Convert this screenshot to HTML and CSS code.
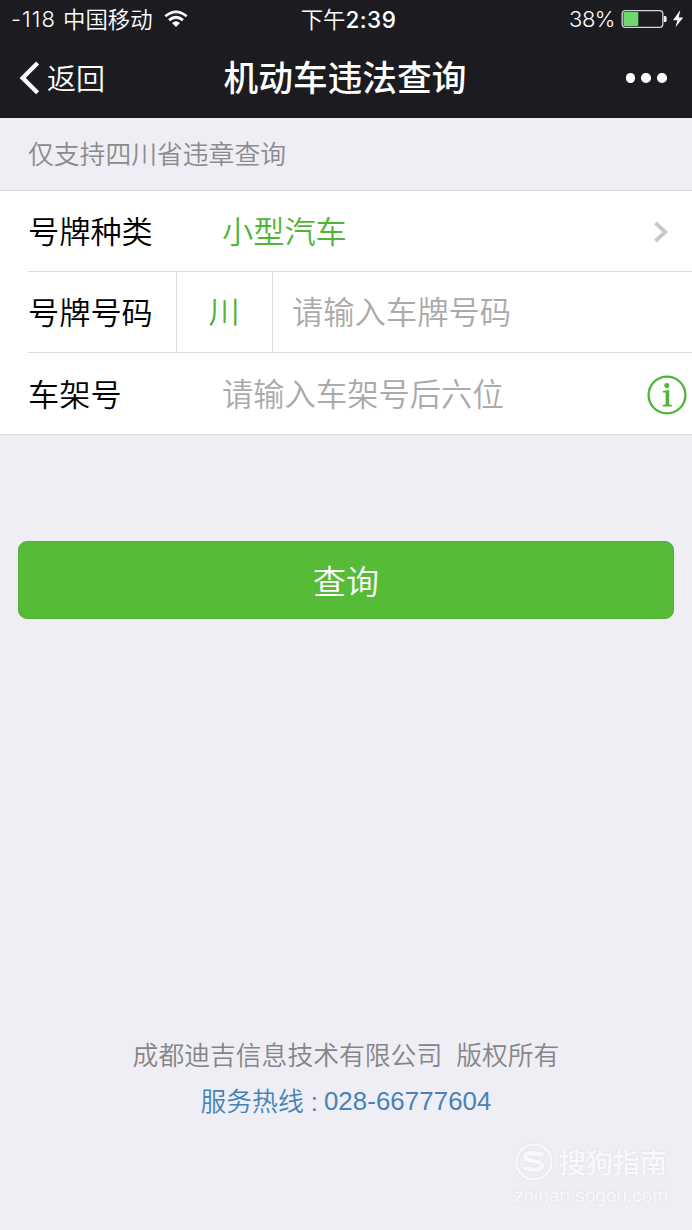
FILE: index.html
```html
<!DOCTYPE html>
<html lang="zh-CN">
<head>
<meta charset="utf-8">
<title>机动车违法查询</title>
<link rel="stylesheet" href="styles.css">
</head>
<body>
<div class="screen">
  <header class="top">
    <div class="status">
      <div class="status-left">
        <span class="signal">-118</span><span class="carrier">中国移动</span>
        <svg class="wifi" width="24" height="18" viewBox="0 0 24 18" fill="none" stroke="#fff" stroke-width="2.7">
          <path d="M1.3 6.2Q12 -2.6 22.7 6.2"/>
          <path d="M5 10.1Q12 4.4 19 10.1"/>
          <path d="M12 17L8 12.9Q12 9.8 16 12.9Z" fill="#fff" stroke="none"/>
        </svg>
      </div>
      <div class="status-time">下午<b>2:39</b></div>
      <div class="status-right">
        <span class="percent">38%</span>
        <svg class="battery" width="64" height="20" viewBox="0 0 64 20">
          <rect x="1.2" y="1.7" width="40.6" height="16.6" rx="3" fill="none" stroke="#d6d6d8" stroke-width="1.3"/>
          <rect x="2.5" y="3" width="14.8" height="14" rx="1" fill="#70d76d"/>
          <path d="M42.8 7h1.2q1.6 0 1.6 1.6v2.8q0 1.6-1.6 1.6h-1.2z" fill="#fff"/>
          <path d="M59.3 1L52 11.2h4.4L54.5 18.3 62.2 8.4h-4.5z" fill="#fff"/>
        </svg>
      </div>
    </div>
    <nav class="nav">
      <div class="back">
        <svg width="22" height="36" viewBox="0 0 22 36" fill="none" stroke="#fff" stroke-width="4.3"><path d="M19.6 3L4.6 17.9 19.6 32.8"/></svg>
        <span>返回</span>
      </div>
      <h1 class="title">机动车违法查询</h1>
      <div class="more"><i></i><i></i><i></i></div>
    </nav>
  </header>

  <p class="tip">仅支持四川省违章查询</p>

  <section class="form">
    <div class="row">
      <span class="label">号牌种类</span>
      <span class="value green">小型汽车</span>
      <svg class="chevron" width="16" height="22" viewBox="0 0 16 22" fill="none" stroke="#c7c7cc" stroke-width="3.8"><path d="M2.5 2L12.2 11 2.5 20"/></svg>
    </div>
    <div class="row">
      <span class="label narrow">号牌号码</span>
      <span class="province green">川</span>
      <span class="value plate hint">请输入车牌号码</span>
    </div>
    <div class="row last">
      <span class="label">车架号</span>
      <span class="value hint">请输入车架号后六位</span>
      <svg class="info" width="40" height="40" viewBox="0 0 40 40">
        <circle cx="20" cy="20" r="18.4" fill="none" stroke="#50b435" stroke-width="2.3"/>
        <circle cx="19.8" cy="10.6" r="2.5" fill="#50b435"/>
        <path d="M15.8 16L22.2 15v14.5l2.7.4v1.6h-9.2v-1.6l2.9-.4V17.6l-2.8-.2z" fill="#50b435"/>
      </svg>
    </div>
  </section>

  <button class="submit">查询</button>

  <footer class="footer">
    <p class="owner"><span>成都迪吉信息技术有限公司</span><span>版权所有</span></p>
    <p class="hotline"><span>服务热线</span><span class="colon">:</span><span class="number">028-66777604</span></p>
  </footer>

  <div class="mark">
    <div class="mark-top">
      <svg width="40" height="40" viewBox="0 0 40 40" fill="none" stroke="#f9f9fb">
        <circle cx="20" cy="20" r="17.5" stroke-width="2.2"/>
        <path d="M29.5 12.7Q10 8.5 11.5 15.5C12.5 20 28 18 28 24Q28 30 9.5 26" stroke-width="4.3"/>
      </svg>
      <span>搜狗指南</span>
    </div>
    <div class="mark-url">zhinan.sogou.com</div>
  </div>
</div>
</body>
</html>
```
FILE: styles.css
```css
* { box-sizing: border-box; }

body {
  margin: 0;
  background: #efeef4;
  font-family: "Liberation Sans", "Noto Sans CJK SC", sans-serif;
  font-weight: 350;
}

p, h1 { margin: 0; }

.screen {
  width: 692px;
  height: 1230px;
  display: flex;
  flex-direction: column;
  overflow: hidden;
  white-space: nowrap;
}

.top {
  height: 118px;
  background: #1c1b20;
  color: #fff;
}

.status {
  display: grid;
  grid-template-columns: 1fr auto 1fr;
  grid-template-rows: 38px;
  height: 38px;
  line-height: 38px;
  font-family: Inter, "Noto Sans CJK SC", sans-serif;
  font-size: 22.4px;
}

.status-left { display: flex; align-items: center; padding-left: 11px; }
.signal { width: 52px; font-size: 22px; font-weight: 350; letter-spacing: 1.1px; }
.carrier { padding-top: 1px; }
.wifi { margin-left: 11px; margin-top: -1px; }
.status-time { padding-left: 5px; padding-top: 1px; }
.status-time b { font-weight: 500; font-size: 22.5px; letter-spacing: 0.5px; }
.status-right { display: flex; align-items: center; justify-content: flex-end; padding-right: 7px; }
.percent { font-size: 22px; letter-spacing: -0.5px; }
.battery { margin-left: 6px; }

.nav {
  display: grid;
  grid-template-columns: 1fr auto 1fr;
  grid-template-rows: 80px;
  height: 80px;
  line-height: 80px;
}

.back { display: flex; align-items: center; padding-left: 18px; font-size: 29px; }
.back span { margin-left: 7px; padding-top: 3px; }
.title { margin-left: -2px; padding-top: 1px; font-size: 34.7px; font-weight: 500; }
.more { display: flex; align-items: center; justify-content: flex-end; gap: 6px; padding-right: 25.5px; }
.more i { width: 9.6px; height: 9.6px; border-radius: 50%; background: #fff; }

.tip {
  height: 72px;
  padding: 1px 0 0 28px;
  line-height: 73px;
  font-size: 25.8px;
  color: #8b8b8e;
}

.form {
  height: 245px;
  padding-left: 28px;
  background: #fff;
  border-top: 1px solid #d9d9dc;
  border-bottom: 1px solid #d9d9dc;
  font-size: 31.2px;
  color: #000;
}

.row {
  display: flex;
  align-items: center;
  height: 81px;
  line-height: 82px;
  border-bottom: 1px solid #dcdcdd;
}

.row.last { border-bottom: 0; }
.label, .value { padding-top: 4px; }
.label { width: 194px; }
.label.narrow { width: 148px; }
.value { flex: 1; }
.green { color: #50b435; }
.hint { color: #aaa; font-size: 31.3px; }
.province {
  width: 97px;
  height: 80px;
  padding-right: 1px;
  text-align: center;
  border-left: 1px solid #dcdcdd;
  border-right: 1px solid #dcdcdd;
}
.plate { padding-left: 19px; }
.chevron { margin-right: 23px; margin-top: 2px; }
.info { margin-right: 5px; margin-top: 3px; }

.submit {
  height: 78px;
  margin: 106px 18px 0;
  padding: 5px 0 0;
  border: 1px solid #52ad3a;
  border-radius: 9px;
  background: #56bb37;
  color: #fff;
  font: inherit;
  font-size: 33px;
  line-height: 71px;
}

.footer {
  margin-top: 414px;
  text-align: center;
  font-size: 25.8px;
  line-height: 46px;
}

.owner { display: flex; justify-content: center; gap: 14px; color: #858588; }
.hotline { display: flex; justify-content: center; color: #4782b8; }
.colon { margin: 0 6px 0 7px; }
.number { margin-top: -1px; letter-spacing: 0.1px; }

.mark {
  align-self: flex-end;
  width: 178px;
  margin-top: 16px;
  color: #f9f9fb;
  filter: drop-shadow(0 0 1px #dddde3);
}
.mark-top { display: flex; align-items: center; gap: 5px; height: 42px; font-size: 27px; font-weight: 500; line-height: 42px; }
.mark-top span { padding-top: 3px; }
.mark-url { font-size: 19px; line-height: 26px; }
```
